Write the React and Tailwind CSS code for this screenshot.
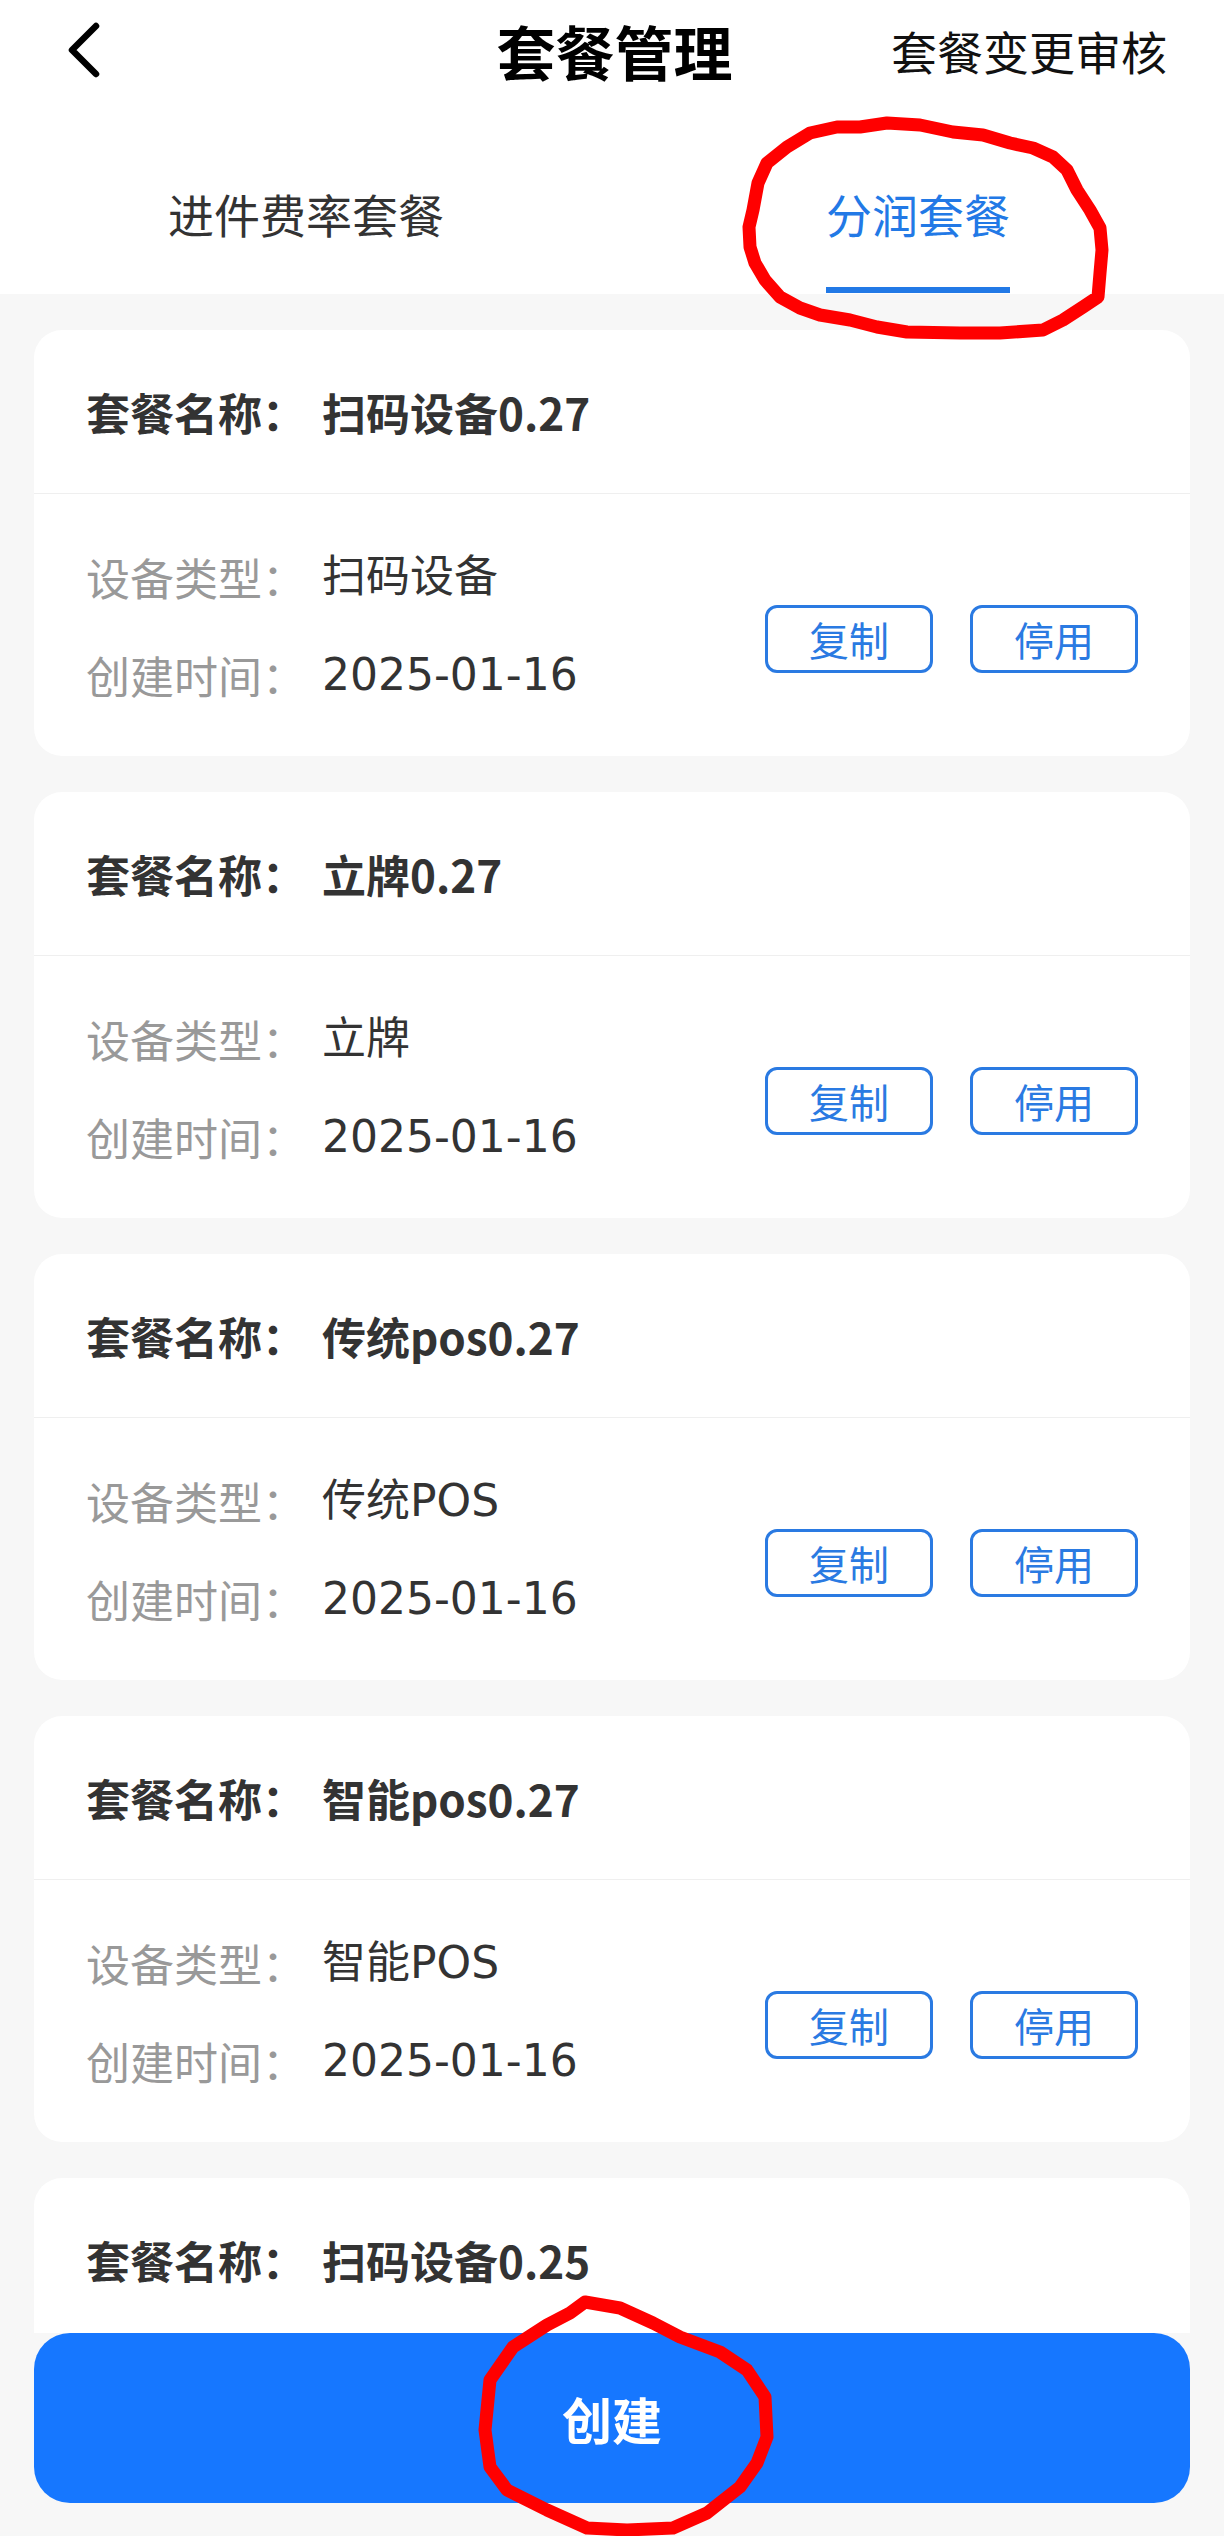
import React from "react";

const packages = [
  { id: 1, name: "扫码设备0.27", type: "扫码设备", created: "2025-01-16" },
  { id: 2, name: "立牌0.27", type: "立牌", created: "2025-01-16" },
  { id: 3, name: "传统pos0.27", type: "传统POS", created: "2025-01-16" },
  { id: 4, name: "智能pos0.27", type: "智能POS", created: "2025-01-16" },
  { id: 5, name: "扫码设备0.25", type: "扫码设备", created: "2025-01-16" },
];

// hand-drawn red marks on top of the screenshot
const tabMark = [
  [753, 210], [758, 183], [767, 163], [787, 147], [810, 133], [837, 127], [860, 127],
  [887, 123], [920, 125], [953, 132], [983, 135], [1010, 143], [1033, 148], [1053, 157],
  [1067, 170], [1077, 190], [1090, 210], [1100, 228], [1102, 250], [1100, 273],
  [1098, 297], [1083, 307], [1063, 320], [1043, 330], [1000, 333], [960, 333],
  [907, 332], [877, 327], [850, 320], [820, 315], [800, 308], [780, 297], [765, 280],
  [755, 263], [750, 247], [749, 227], [753, 210],
];

const buttonMark = [
  [585, 2302], [620, 2308], [653, 2323], [680, 2337], [720, 2352], [747, 2370],
  [765, 2397], [767, 2437], [757, 2463], [740, 2487], [707, 2513], [673, 2528],
  [627, 2530], [587, 2528], [547, 2510], [507, 2490], [490, 2467], [485, 2430],
  [490, 2380], [513, 2347], [547, 2325], [570, 2313], [585, 2302],
];

const toPoints = (pts) => pts.map(([x, y]) => `${x},${y}`).join(" ");

const valueFont = { fontFamily: '"DejaVu Sans", "Noto Sans CJK SC", sans-serif' };

function Header() {
  return (
    <div className="flex h-[100px] shrink-0 items-center bg-white">
      <div className="flex flex-1 items-center pl-[62px]">
        <svg width="44" height="60" viewBox="0 0 44 60" fill="none">
          <path d="M34 6 L10 30 L34 54" stroke="#000" strokeWidth="6.5" strokeLinecap="round" strokeLinejoin="round" />
        </svg>
      </div>
      <div className="text-[59px] font-bold leading-none text-black">套餐管理</div>
      <div className="flex flex-1 justify-end pr-[57px] text-[46px] leading-none text-[#111]">套餐变更审核</div>
    </div>
  );
}

function Tabs() {
  return (
    <div className="flex h-[194px] shrink-0 bg-white">
      <div className="flex flex-1 justify-center pt-[83px]">
        <div className="flex flex-col">
          <span className="text-[46px] leading-[60px] text-[#333]">进件费率套餐</span>
        </div>
      </div>
      <div className="flex flex-1 justify-center pt-[83px]">
        <div className="flex flex-col">
          <span className="text-[46px] leading-[60px] text-[#2279e6]">分润套餐</span>
          <div className="mt-[44px] h-[6px] bg-[#2279e6]" />
        </div>
      </div>
    </div>
  );
}

function PackageCard({ item }) {
  return (
    <div className="shrink-0 overflow-hidden rounded-[28px] bg-white">
      <div className="flex h-[163px] items-center px-[52px] text-[44px] font-bold leading-[60px] text-[#333]">
        <span className="inline-block w-[236px]">套餐名称：</span>
        <span>{item.name}</span>
      </div>
      <div className="h-px bg-[#efefef]" />
      <div className="flex items-center justify-between px-[52px] pb-[51px] pt-[53px]">
        <div className="flex flex-col gap-[38px] text-[44px] leading-[60px]">
          <div className="flex">
            <span className="w-[236px] text-[#999]">设备类型：</span>
            <span className="text-[#333]" style={valueFont}>{item.type}</span>
          </div>
          <div className="flex">
            <span className="w-[236px] text-[#999]">创建时间：</span>
            <span className="text-[#333]" style={valueFont}>{item.created}</span>
          </div>
        </div>
        <div className="mt-[26px] flex gap-[37px]">
          <button className="flex h-[68px] w-[168px] items-center justify-center rounded-[12px] border-[3px] border-[#2a7ae2] text-[40px] leading-none text-[#2a7ae2]">
            复制
          </button>
          <button className="flex h-[68px] w-[168px] items-center justify-center rounded-[12px] border-[3px] border-[#2a7ae2] text-[40px] leading-none text-[#2a7ae2]">
            停用
          </button>
        </div>
      </div>
    </div>
  );
}

export default function App() {
  return (
    <div
      className="relative flex h-[2536px] w-full flex-col overflow-hidden bg-[#f7f7f7]"
      style={{ fontFamily: '"Noto Sans CJK SC", "Noto Sans", sans-serif' }}
    >
      <Header />
      <Tabs />

      {/* package list, cut off by the footer */}
      <div className="flex h-[2039px] shrink-0 flex-col gap-[36px] overflow-hidden px-[34px] pt-[36px]">
        {packages.map((item) => (
          <PackageCard key={item.id} item={item} />
        ))}
      </div>

      {/* bottom action */}
      <div className="h-[203px] shrink-0 bg-[#f7f7f7] px-[34px]">
        <button className="flex h-[170px] w-full items-center justify-center rounded-[36px] bg-[#1677ff] text-[50px] font-bold leading-none text-white">
          创建
        </button>
      </div>

      <svg
        className="pointer-events-none absolute inset-0"
        width="1224"
        height="2536"
        viewBox="0 0 1224 2536"
        fill="none"
      >
        <polyline points={toPoints(tabMark)} stroke="#ff0000" strokeWidth="13" strokeLinejoin="round" strokeLinecap="round" />
        <polyline points={toPoints(buttonMark)} stroke="#ff0000" strokeWidth="13" strokeLinejoin="round" strokeLinecap="round" />
      </svg>
    </div>
  );
}
